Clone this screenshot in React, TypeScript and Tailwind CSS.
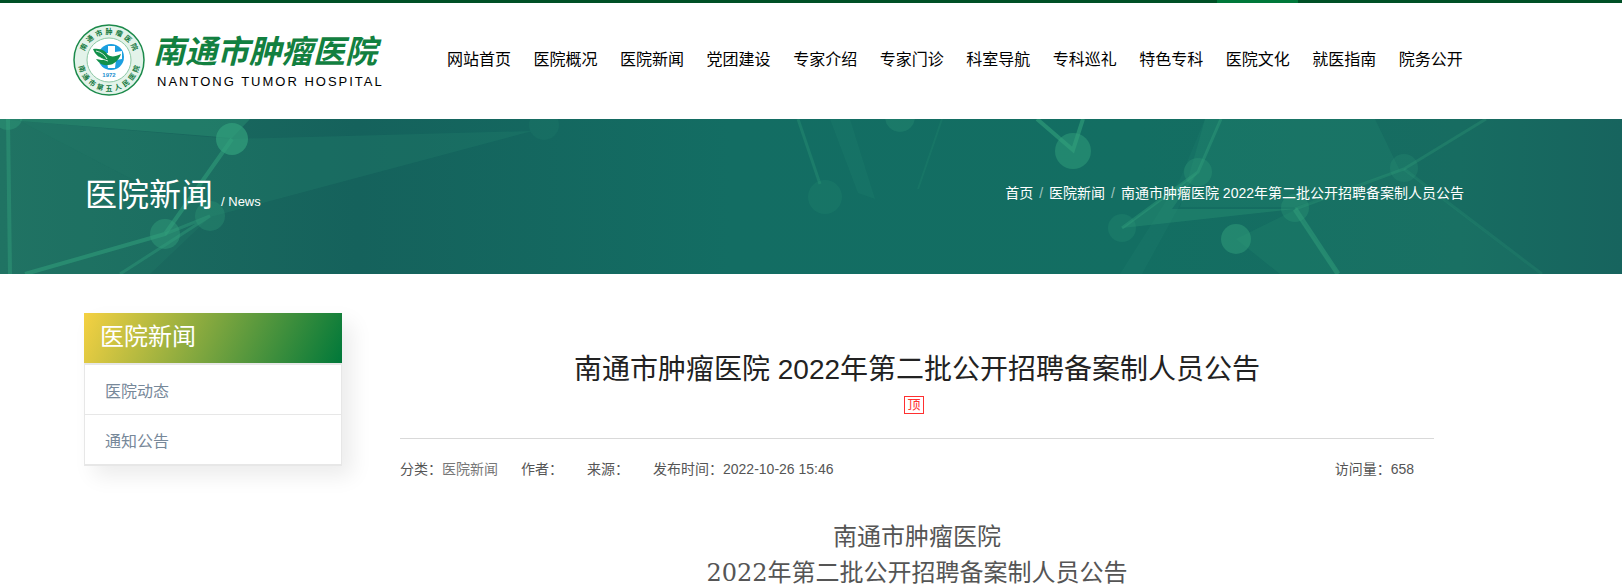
import { clsx } from "clsx";

const sans = "font-['Liberation_Sans','Noto_Sans_CJK_SC',sans-serif]";
const serif = "font-['DejaVu_Serif','Noto_Sans_CJK_SC',serif]";

const navItems = [
  "网站首页",
  "医院概况",
  "医院新闻",
  "党团建设",
  "专家介绍",
  "专家门诊",
  "科室导航",
  "专科巡礼",
  "特色专科",
  "医院文化",
  "就医指南",
  "院务公开",
];

const sideItems = ["医院动态", "通知公告"];

const articleTitle = "南通市肿瘤医院 2022年第二批公开招聘备案制人员公告";

const ringTop = "南通市肿瘤医院".split("");
const ringBottom = "南通市第五人民医院".split("");

const Emblem = () => (
  <svg viewBox="0 0 72 72" className="h-18 w-18 shrink-0" aria-hidden="true">
    <circle cx="36" cy="36" r="35" fill="#e3f3ea" stroke="#1c8a4b" strokeWidth="1.5" />
    <circle cx="36" cy="36" r="22" fill="#fff" stroke="#8cc8a5" strokeWidth="1" />
    {/* names around the ring */}
    <g fill="#14793f" fontSize="7" fontWeight="700" textAnchor="middle">
      {ringTop.map((char, i) => (
        <text key={char} x="36" y="10" transform={`rotate(${(i - 3) * 21} 36 36)`}>
          {char}
        </text>
      ))}
      {ringBottom.map((char, i) => (
        <text key={char} x="36" y="67" transform={`rotate(${(4 - i) * 18} 36 36)`}>
          {char}
        </text>
      ))}
    </g>
    <circle cx="38" cy="33" r="13" fill="#1b9fe0" />
    <path d="M35 22 h7 v6 l7 -1 v8 l-6 1 -1 8 h-7 l-1 -6 -9 1 v-9 l10 -1z" fill="#fff" />
    <path
      d="M20 25 C27 24 32 26 35 31 C38 33 42 33 48 30 C46 36 41 41 35 41 C30 42 26 39 23 35 C27 36 30 36 32 36 C27 34 22 31 20 25Z"
      fill="#12904a"
    />
    <path d="M23 27 C28 28 32 31 34 35 M26 33 C29 35 32 36 35 37" fill="none" stroke="#fff" strokeWidth="0.8" />
    <text x="36" y="53" fill="#1b8fd0" fontSize="6" fontWeight="700" textAnchor="middle">
      1972
    </text>
  </svg>
);

const Logo = () => (
  <a href="#" className="flex items-center gap-2">
    <Emblem />
    <span className="flex flex-col gap-1 pt-1">
      <span className="text-[32px] leading-9 font-bold text-[#128040] italic">南通市肿瘤医院</span>
      <span className="pl-1 text-[13px] leading-4 tracking-[2px] text-black">NANTONG TUMOR HOSPITAL</span>
    </span>
  </a>
);

const BannerArt = () => (
  <svg
    viewBox="0 0 1622 155"
    preserveAspectRatio="xMidYMid slice"
    className="absolute inset-0 h-full w-full"
    aria-hidden="true"
  >
    <defs>
      <linearGradient id="bannerBg" x1="0" x2="1" y1="0" y2="0">
        <stop offset="0" stopColor="#1e6e60" />
        <stop offset="0.22" stopColor="#15625c" />
        <stop offset="0.45" stopColor="#136d63" />
        <stop offset="0.7" stopColor="#136e62" />
        <stop offset="0.9" stopColor="#176c61" />
        <stop offset="1" stopColor="#17645e" />
      </linearGradient>
    </defs>
    <rect width="1622" height="155" fill="url(#bannerBg)" />
    <g fill="#32a07c">
      <path d="M0 0 L20 2 L135 62 L190 78 L165 115 L210 98 L150 155 L0 155Z" opacity="0.12" />
      <path d="M20 0 L250 0 L232 19 L20 2Z" opacity="0.35" />
      <path d="M20 2 L232 20 L532 12 L210 98 L165 115 L190 78 L135 62Z" opacity="0.14" />
      <path d="M830 0 L850 0 L875 80 L858 74Z" opacity="0.12" />
      <path d="M1205 0 L1375 0 L1400 52 L1295 88 L1180 88Z" opacity="0.14" />
      <path d="M1205 0 L1221 0 L1198 53 L1142 155 L1120 155 L1180 60Z" opacity="0.1" />
      <path d="M1122 109 L1198 53 L1172 90 L1295 90Z" opacity="0.3" />
      <path d="M1236 120 L1295 91 L1340 155 L1280 155Z" opacity="0.15" />
      <path d="M1295 90 L1404 50 L1540 155 L1340 155Z" opacity="0.08" />
    </g>
    <g fill="none" stroke="#32a07c">
      <path d="M8 0 L10 155" strokeWidth="4" opacity="0.45" />
      <path d="M232 20 L165 115 L25 155" strokeWidth="4" opacity="0.55" />
      <path d="M210 97 L165 115 M210 97 L120 155" strokeWidth="3" opacity="0.4" />
      <path d="M798 0 L820 65" strokeWidth="3" opacity="0.3" />
      <path d="M942 0 L918 70" strokeWidth="2" opacity="0.15" />
      <path d="M1037 0 L1073 31 L1083 0" strokeWidth="4" opacity="0.6" />
      <path d="M1221 0 L1198 53 L1122 109" strokeWidth="3" opacity="0.4" />
      <path d="M1295 90 L1404 50 L1486 0" strokeWidth="3" opacity="0.3" />
      <path d="M1404 50 L1542 155" strokeWidth="3" opacity="0.2" />
      <path d="M1295 90 L1338 155" strokeWidth="5" opacity="0.5" />
    </g>
    <g fill="#32a07c">
      <circle cx="8" cy="-4" r="15" opacity="0.4" />
      <circle cx="232" cy="20" r="16" opacity="0.7" />
      <circle cx="165" cy="115" r="15" opacity="0.45" />
      <circle cx="210" cy="97" r="15" opacity="0.3" />
      <circle cx="544" cy="6" r="15" opacity="0.12" />
      <circle cx="825" cy="78" r="17" opacity="0.15" />
      <circle cx="900" cy="-2" r="15" opacity="0.25" />
      <circle cx="1073" cy="32" r="18" opacity="0.5" />
      <circle cx="1198" cy="53" r="14" opacity="0.3" />
      <circle cx="1122" cy="109" r="14" opacity="0.2" />
      <circle cx="1295" cy="89" r="14" opacity="0.3" />
      <circle cx="1236" cy="120" r="15" opacity="0.5" />
      <circle cx="1404" cy="49" r="14" opacity="0.2" />
    </g>
  </svg>
);

const App = () => {
  return (
    <div className={clsx("min-h-screen bg-white text-sm text-[#555]", sans)}>
      {/* Header */}
      <div className="flex h-[3px] bg-[#005026]">
        <span className="ml-[75%] w-[5%] bg-[#00783a]" />
      </div>
      <header className="flex items-start pt-[21px] pr-[159px] pb-[23px] pl-[73px]">
        <Logo />
        <nav className="ml-auto flex w-[1016px] justify-between pt-6 text-base text-black">
          {navItems.map((item) => (
            <a href="#" key={item} className="whitespace-nowrap">
              {item}
            </a>
          ))}
        </nav>
      </header>

      {/* Banner */}
      <section className="relative h-[155px] overflow-hidden">
        <BannerArt />
        <div className="relative flex h-full items-center justify-between pr-[158px] pl-[85px] text-white">
          <h2 className="flex items-baseline gap-2 pt-1 text-[32px] leading-10">
            医院新闻 <span className="text-[13px]">/ News</span>
          </h2>
          <div className="flex gap-1.5 pb-2 text-sm leading-5">
            <a href="#">首页</a>
            <span className="text-white/60">/</span>
            <a href="#">医院新闻</a>
            <span className="text-white/60">/</span>
            <span>{articleTitle}</span>
          </div>
        </div>
      </section>

      <main className="flex items-start gap-[58px] pt-[39px] pr-[188px] pl-[84px]">
        {/* Sidebar */}
        <aside className="w-[258px] shrink-0 shadow-[10px_10px_20px_rgba(0,0,0,0.08)]">
          <h3 className="h-[50px] bg-linear-[115deg,#f5d142,#00783a] pl-4 text-2xl leading-[48px] text-white">
            医院新闻
          </h3>
          <ul className="divide-y divide-[#e7e7e7] border-x border-t-2 border-b-2 border-[#e7e7e7] bg-white">
            {sideItems.map((item) => (
              <li key={item}>
                <a href="#" className="block h-[49px] pl-5 text-base leading-[54px] text-[#778899]">
                  {item}
                </a>
              </li>
            ))}
          </ul>
        </aside>

        {/* Article */}
        <article className="min-w-0 flex-1 pt-[37px]">
          <div className="flex flex-col items-center border-b border-[#d9d9d9] pb-6">
            <h1 className="text-[28px] leading-10 text-[#222]">{articleTitle}</h1>
            <span className="mt-1.5 mr-1.5 border border-[#ff3030] px-0.5 text-[13px] leading-4 text-[#ff3030]">
              顶
            </span>
          </div>
          <div className="flex pt-5 pr-5 leading-5">
            <span className="w-[121px]">
              分类：
              <a href="#" className="text-[#777]">
                医院新闻
              </a>
            </span>
            <span className="w-[66px]">作者：</span>
            <span className="w-[66px]">来源：</span>
            <span>发布时间：2022-10-26 15:46</span>
            <span className="ml-auto">访问量：658</span>
          </div>
          <div className={clsx("pt-10 text-center text-2xl leading-9", serif)}>
            <p>南通市肿瘤医院</p>
            <p>2022年第二批公开招聘备案制人员公告</p>
          </div>
        </article>
      </main>
    </div>
  );
};

export default App;
